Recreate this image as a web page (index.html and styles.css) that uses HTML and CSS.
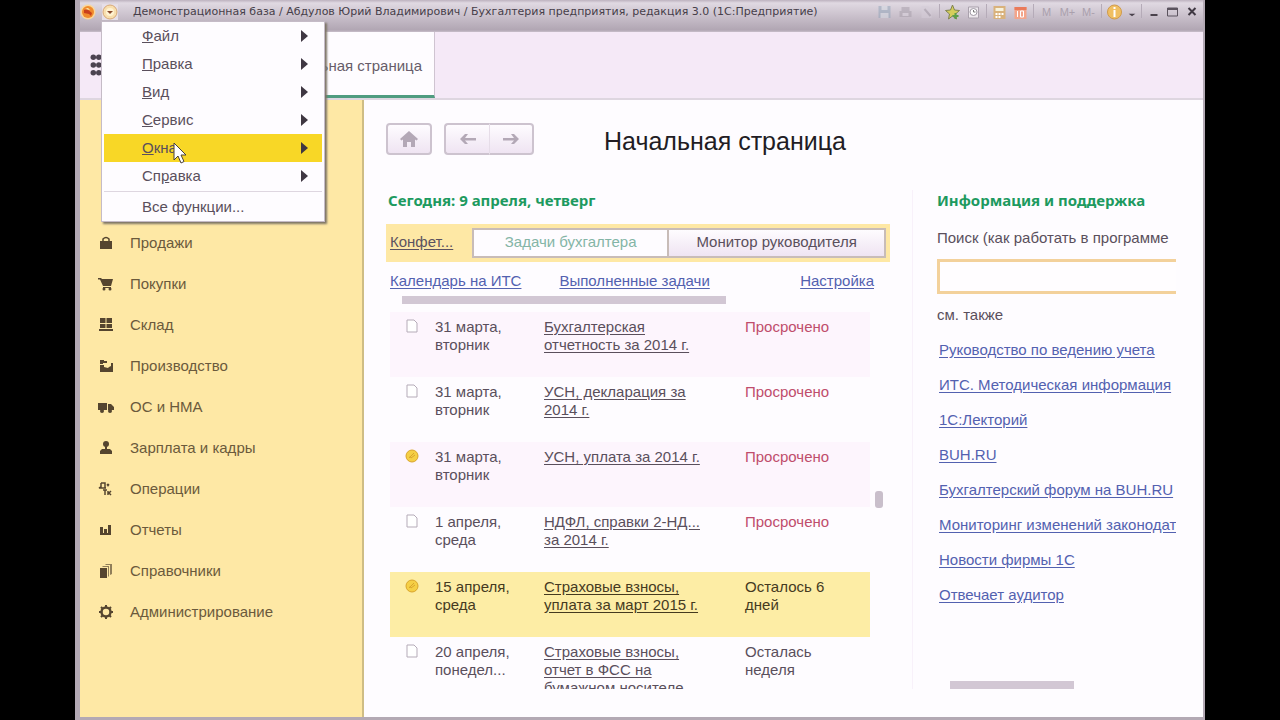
FILE: index.html
```html
<!DOCTYPE html>
<html lang="ru">
<head>
  <meta charset="UTF-8">
  <meta name="viewport" content="width=device-width, initial-scale=1.0">
  <title>Бухгалтерия предприятия, редакция 3.0</title>
  <link rel="stylesheet" href="styles.css">
</head>
<body>
  <div class="window">

    <!-- Заголовок окна -->
    <header class="titlebar">
      <svg class="orb" viewBox="0 0 16 16"><circle cx="8" cy="8" r="7.5" fill="#f9d79a"/><circle cx="8" cy="8" r="6" fill="#f08a2c"/><path d="M4 6l3-1 5 4-1 3-2-2-5-1z" fill="#c8401c"/><path d="M5 5l3-1 2 2z" fill="#fff0b0"/></svg>
      <button class="orb-button" aria-label="Главное меню">
        <svg class="orb" viewBox="0 0 16 16"><circle cx="8" cy="8" r="7" fill="#f8dfae" stroke="#d8a977"/><circle cx="8" cy="8" r="4" fill="#fff3d2"/><path d="M5 7h6L8 10z" fill="#8a4a2c"/></svg>
      </button>
      <h1 class="caption">Демонстрационная база / Абдулов Юрий Владимирович / Бухгалтерия предприятия, редакция 3.0 (1С:Предприятие)</h1>
      <div class="tools">
        <svg class="tool pale" viewBox="0 0 16 16"><path d="M2 2h12v12H2z" fill="#8fa3b8"/><path d="M5 2h6v4H5zM4 9h8v5H4z" fill="#d5dce4"/></svg>
        <svg class="tool pale" viewBox="0 0 16 16"><path d="M4 3h8v4h2v6H2V7h2z" fill="#a59ca8"/><path d="M5 9h6v3H5z" fill="#d9d2dc"/></svg>
        <svg class="tool pale" viewBox="0 0 16 16"><path d="M3 2h7l3 3v9H3z" fill="#d6ced9"/><path d="M6 5l6 7" stroke="#9c93a0" stroke-width="2"/></svg>
        <span class="divider"></span>
        <svg class="tool" viewBox="0 0 16 16"><path d="M8 1l2 5 5 .5-4 3.500 1 5L8 12l-4 3 1-5L1 6.500 6 6z" fill="#d5ce5c" stroke="#7f8450"/><path d="M11 9v6M8 12h6" stroke="#5b9e4a" stroke-width="2"/></svg>
        <svg class="tool" viewBox="0 0 16 16"><path d="M3 3h10v11H3z" fill="#eee9ee" stroke="#aaa2ad"/><circle cx="8" cy="8" r="3.500" fill="#fff" stroke="#a09aa5"/><path d="M8 6v2h2" stroke="#777" fill="none"/></svg>
        <span class="divider"></span>
        <svg class="tool" viewBox="0 0 16 16"><path d="M2 2h12v13H2z" fill="#d9b27c"/><path d="M4 4h8v3H4z" fill="#f6f2dc"/><path d="M4 9h2v2H4zM7 9h2v2H7zM10 9h2v2h-2zM4 12h2v2H4zM7 12h2v2H7z" fill="#fff"/></svg>
        <svg class="tool" viewBox="0 0 16 16"><path d="M2 3h12v12H2z" fill="#f3a58b"/><path d="M2 3h12v3H2z" fill="#ea7a5a"/><path d="M5 7v6M8 7h3v6H8z" stroke="#fff" fill="none"/></svg>
        <span class="divider"></span>
        <span class="memory">M</span>
        <span class="memory">M+</span>
        <span class="memory">M-</span>
        <span class="divider"></span>
        <svg class="tool" viewBox="0 0 16 16"><circle cx="8" cy="8" r="7" fill="#f0bf62" stroke="#cf9a4c"/><path d="M7 3h2v2H7zM7 6h2v7H7z" fill="#fff"/></svg>
        <svg class="sys narrow" viewBox="0 0 12 16"><path d="M2 10h8l-4 3z" fill="#4a424c"/></svg>
        <span class="divider"></span>
        <button class="sysbutton" aria-label="Свернуть"><svg class="sys" viewBox="0 0 12 16"><path d="M3 10h7v2H3z" fill="#4a424c"/></svg></button>
        <button class="sysbutton" aria-label="Развернуть"><svg class="sys" viewBox="0 0 12 16"><path d="M1 4h10v8H1z" fill="none" stroke="#5b535e"/><path d="M1 4h10v2H1z" fill="#5b535e"/></svg></button>
        <button class="sysbutton" aria-label="Закрыть"><svg class="sys" viewBox="0 0 12 16"><path d="M3 4l7 7M10 4l-7 7" stroke="#3f3842" stroke-width="2"/></svg></button>
      </div>
    </header>

    <!-- Панель вкладок -->
    <div class="tabs">
      <svg class="grid-icon" viewBox="0 0 20 20"><g fill="#4b4350"><circle cx="3" cy="3" r="2.500"/><circle cx="8" cy="3" r="2.500"/><circle cx="13" cy="3" r="2.500"/><circle cx="3" cy="10" r="2.500"/><circle cx="8" cy="10" r="2.500"/><circle cx="13" cy="10" r="2.500"/><circle cx="3" cy="17" r="2.500"/><circle cx="8" cy="17" r="2.500"/><circle cx="13" cy="17" r="2.500"/></g></svg>
      <a class="tab" href="#">Начальная страница</a>
    </div>

    <div class="workspace">
      <!-- Панель разделов -->
      <nav class="sections">
        <a href="#"><svg viewBox="0 0 16 16"><path d="M2 6h12v8H2z"/><path d="M5 6V4q3-3 6 0v2" fill="none" stroke="#55452f" stroke-width="1.500"/></svg>Продажи</a>
        <a href="#"><svg viewBox="0 0 16 16"><path d="M0 2h3l1 1h11l-2 7H5L2 3.500H0zM5 11h8v1H5z"/><circle cx="6" cy="13" r="1.500"/><circle cx="12" cy="13" r="1.500"/></svg>Покупки</a>
        <a href="#"><svg viewBox="0 0 16 16"><path d="M2 1h5.500v5H2zM8.500 1H14v5H8.500zM2 7h5.500v4H2zM8.500 7H14v4H8.500zM1 12h14v2H1z"/></svg>Склад</a>
        <a href="#"><svg viewBox="0 0 16 16"><path d="M2 14V7h4v2l4 1 1-1 2-1V5h2v9z"/><path d="M2 2h4v1h3v2H5v1H2z"/></svg>Производство</a>
        <a href="#"><svg viewBox="0 0 16 16"><path d="M0 4h9v7H0zM10 5h3l3 3v3h-6z"/><circle cx="4" cy="12" r="2"/><circle cx="12" cy="12" r="2"/></svg>ОС и НМА</a>
        <a href="#"><svg viewBox="0 0 16 16"><circle cx="8" cy="4" r="3"/><path d="M7 6h2v3h3l2 2v3H2v-3l2-2h3z"/></svg>Зарплата и кадры</a>
        <a href="#"><svg viewBox="0 0 16 16"><path d="M3 2h4v5M3 2v4L1 7h7M9 3l2 2M11 3L9 5M7 9v5M5 9h4M10 10v4M13 10l-2 2 2 2" fill="none" stroke="#55452f" stroke-width="1.500"/></svg>Операции</a>
        <a href="#"><svg viewBox="0 0 16 16"><path d="M2 5h3v7H2zM6 7h3v5H6zM10 3h3v9h-3zM2 11h11v2H2z"/></svg>Отчеты</a>
        <a href="#"><svg viewBox="0 0 16 16"><path d="M2 5h7v10H2z"/><path d="M4 4l1-1h6v10l-1 1V4zM7 2l1-1h6v10l-2 1V2z" opacity=".65"/></svg>Справочники</a>
        <a href="#"><svg viewBox="0 0 16 16"><circle cx="8" cy="8" r="4.500" fill="none" stroke="#55452f" stroke-width="2.500"/><path d="M8 1v3M8 12v3M1 8h3M12 8h3M3 3l2 2M11 11l2 2M13 3l-2 2M3 13l2-2" stroke="#55452f" stroke-width="2"/></svg>Администрирование</a>
      </nav>

      <main class="page">
        <div class="page-head">
          <button class="push" aria-label="Домой"><svg viewBox="0 0 20 20"><path d="M10 2l9 8-1.500 1.500L16 10.500V18h-4v-5H8v5H4v-7.500l-1.500 1L1 10z"/></svg></button>
          <div class="pair">
            <button class="push" aria-label="Назад"><svg viewBox="0 0 20 20"><path d="M18 9v2.500H7l3 3.500H7l-5-5 5-5h3L7 9z"/></svg></button>
            <button class="push" aria-label="Вперед"><svg viewBox="0 0 20 20"><path d="M2 9v2.500h11L10 15h3l5-5-5-5h-3l3 4z"/></svg></button>
          </div>
          <h2>Начальная страница</h2>
        </div>

        <div class="columns">
          <!-- Задачи -->
          <section class="tasks">
            <h3>Сегодня: 9 апреля, четверг</h3>
            <div class="switch">
              <a class="org" href="#">Конфет...</a>
              <button class="view active">Задачи бухгалтера</button>
              <button class="view">Монитор руководителя</button>
            </div>
            <div class="links">
              <a href="#">Календарь на ИТС</a>
              <a href="#">Выполненные задачи</a>
              <a href="#">Настройка</a>
            </div>
            <div class="hscroll"></div>
            <div class="list">
              <table>
                <tbody>
                  <tr>
                    <td class="mark"><svg viewBox="0 0 14 14"><path d="M2 1h7l3 3v9H2z"/></svg></td>
                    <td class="date">31 марта,<br>вторник</td>
                    <td class="name"><a href="#">Бухгалтерская<br>отчетность за 2014 г.</a></td>
                    <td class="late">Просрочено</td>
                  </tr>
                  <tr>
                    <td class="mark"><svg viewBox="0 0 14 14"><path d="M2 1h7l3 3v9H2z"/></svg></td>
                    <td class="date">31 марта,<br>вторник</td>
                    <td class="name"><a href="#">УСН, декларация за<br>2014 г.</a></td>
                    <td class="late">Просрочено</td>
                  </tr>
                  <tr>
                    <td class="mark"><svg class="coin" viewBox="0 0 14 14"><circle cx="7" cy="7" r="6"/><path d="M4 9l5-5M5 7l1 2 4-3"/></svg></td>
                    <td class="date">31 марта,<br>вторник</td>
                    <td class="name"><a href="#">УСН, уплата за 2014 г.</a></td>
                    <td class="late">Просрочено</td>
                  </tr>
                  <tr>
                    <td class="mark"><svg viewBox="0 0 14 14"><path d="M2 1h7l3 3v9H2z"/></svg></td>
                    <td class="date">1 апреля,<br>среда</td>
                    <td class="name"><a href="#">НДФЛ, справки 2-НД...<br>за 2014 г.</a></td>
                    <td class="late">Просрочено</td>
                  </tr>
                  <tr class="current">
                    <td class="mark"><svg class="coin" viewBox="0 0 14 14"><circle cx="7" cy="7" r="6"/><path d="M4 9l5-5M5 7l1 2 4-3"/></svg></td>
                    <td class="date">15 апреля,<br>среда</td>
                    <td class="name"><a href="#">Страховые взносы,<br>уплата за март 2015 г.</a></td>
                    <td>Осталось 6<br>дней</td>
                  </tr>
                  <tr class="last">
                    <td class="mark"><svg viewBox="0 0 14 14"><path d="M2 1h7l3 3v9H2z"/></svg></td>
                    <td class="date">20 апреля,<br>понедел...</td>
                    <td class="name"><a href="#">Страховые взносы,<br>отчет в ФСС на<br>бумажном носителе</a></td>
                    <td>Осталась<br>неделя</td>
                  </tr>
                </tbody>
              </table>
              <div class="vscroll"></div>
            </div>
          </section>

          <!-- Информация -->
          <section class="info">
            <h3>Информация и поддержка</h3>
            <label for="search">Поиск (как работать в программе</label>
            <input id="search" type="text">
            <p>см. также</p>
            <ul>
              <li><a href="#">Руководство по ведению учета</a></li>
              <li><a href="#">ИТС. Методическая информация</a></li>
              <li><a href="#">1С:Лекторий</a></li>
              <li><a href="#">BUH.RU</a></li>
              <li><a href="#">Бухгалтерский форум на BUH.RU</a></li>
              <li><a href="#">Мониторинг изменений законодат</a></li>
              <li><a href="#">Новости фирмы 1С</a></li>
              <li><a href="#">Отвечает аудитор</a></li>
            </ul>
            <div class="hscroll"></div>
          </section>
        </div>
      </main>
    </div>

    <!-- Главное меню -->
    <div class="menu">
      <button><span><u>Ф</u>айл</span></button>
      <button><span><u>П</u>равка</span></button>
      <button><span><u>В</u>ид</span></button>
      <button><span><u>С</u>ервис</span></button>
      <button class="hover"><span><u>О</u>кна</span></button>
      <button><span>Сп<u>р</u>авка</span></button>
      <hr>
      <button class="plain"><span>Все функции...</span></button>
      <svg class="cursor" viewBox="0 0 14 22"><path d="M1 1v17l4-4 3 7 3-1.500-3-6.500h5z" fill="#fff" stroke="#4a4038"/></svg>
    </div>
  </div>
</body>
</html>
```

FILE: styles.css
```css
* {
  box-sizing: border-box;
}
body {
  margin: 0;
  padding: 0 75px;
  background: #000;
  color: #5a4f5c;
  font-family: "Liberation Sans", Arial, sans-serif;
  font-size: 15px;
  line-height: 18px;
}
button {
  font: inherit;
  color: inherit;
  cursor: pointer;
}
h1, h2, h3, p, ul {
  margin: 0;
  padding: 0;
}
a {
  color: #5361b0;
  text-underline-offset: 2px;
}

.window {
  position: relative;
  display: flex;
  flex-direction: column;
  height: 100vh;
  border: solid #b3a9b4;
  border-width: 0 2px 3px 5px;
  background: #fefcff;
}

/* заголовок */
.titlebar {
  display: flex;
  align-items: flex-start;
  height: 32px;
  padding: 4px 4px 0 0;
  background: linear-gradient(#bdb2bf 0, #e0d9e2 3px, #cdc4cf 14px, #b1a6b3 30px, #c9bfcb);
}
.orb {
  display: block;
  width: 16px;
  height: 16px;
}
.orb-button {
  margin: 0 15px 0 6px;
  padding: 0;
  border: 0;
  background: #e6dfe8;
}
.caption {
  flex: 1;
  overflow: hidden;
  white-space: nowrap;
  color: #463e49;
  font: 11px/16px "DejaVu Sans", sans-serif;
}
.tools {
  display: flex;
  gap: 4px;
}
.tool {
  display: block;
  width: 17px;
  height: 16px;
}
.sys {
  display: block;
  width: 15px;
  height: 16px;
}
.narrow {
  width: 10px;
}
.pale {
  opacity: .5;
}
.memory {
  width: 17px;
  color: #aaa0ad;
  font-size: 11px;
  line-height: 16px;
  text-align: center;
}
.divider {
  width: 1px;
  height: 14px;
  background: #b5abb8;
}
.sysbutton {
  padding: 0;
  border: 0;
  background: none;
}

/* вкладки */
.tabs {
  display: flex;
  height: 68px;
  border-bottom: 2px solid #ded6e0;
  background: #f5e9f7;
}
.grid-icon {
  width: 22px;
  height: 22px;
  margin: 22px 0 0 10px;
}
.tab {
  width: 180px;
  margin-left: 143px;
  padding: 25px 12px 0 0;
  border-right: 1px solid #cfc4d1;
  border-bottom: 3px solid #4f9c80;
  background: #fefcff;
  color: #675c69;
  text-align: right;
  text-decoration: none;
  white-space: nowrap;
}

.workspace {
  display: flex;
  flex: 1;
  min-height: 0;
}

/* разделы */
.sections {
  flex: none;
  width: 284px;
  padding-top: 122px;
  border-right: 2px solid #cfbd85;
  background: #fee8a5;
}
.sections a {
  display: flex;
  align-items: center;
  gap: 16px;
  height: 41px;
  padding-left: 18px;
  color: #6b5a3c;
  text-decoration: none;
}
.sections svg {
  width: 16px;
  height: 16px;
  fill: #55452f;
}

/* страница */
.page {
  display: flex;
  flex: 1;
  flex-direction: column;
  min-width: 0;
  padding: 23px 26px 28px 22px;
}
.page-head {
  display: flex;
  align-items: center;
  gap: 12px;
  height: 32px;
}
.push {
  width: 46px;
  height: 32px;
  padding: 0;
  border: 2px solid #cdc3cf;
  border-radius: 4px;
  background: linear-gradient(#fefcff, #efe4f2);
}
.push svg {
  display: block;
  width: 20px;
  height: 20px;
  margin: 0 auto;
  fill: #b3a8b6;
}
.pair {
  display: flex;
}
.pair .push {
  width: 45px;
}
.pair .push:first-child {
  border-right: 0;
  border-radius: 4px 0 0 4px;
}
.pair .push:last-child {
  border-left: 1px solid #e6dde8;
  border-radius: 0 4px 4px 0;
}
.page-head h2 {
  margin-left: 58px;
  padding-top: 3px;
  color: #221c24;
  font-size: 25px;
  font-weight: normal;
  line-height: 32px;
}
.columns {
  display: flex;
  flex: 1;
  min-height: 0;
  padding-top: 35px;
}
h3 {
  color: #1d9a5f;
  font: bold 15px/20px "Noto Sans", sans-serif;
  white-space: nowrap;
}

/* задачи */
.tasks {
  display: flex;
  flex: 1;
  flex-direction: column;
  max-width: 504px;
}
.tasks h3 {
  padding-left: 2px;
}
.switch {
  display: flex;
  height: 38px;
  margin-top: 14px;
  padding: 4px;
  background: #fee8a5;
}
.org {
  width: 82px;
  color: #5c5360;
  line-height: 28px;
}
.view {
  flex: 9;
  padding: 0 0 2px;
  border: 2px solid #c8bcb8;
  background: linear-gradient(#fefcff, #efe4f2);
  white-space: nowrap;
}
.view + .view {
  flex: 10;
  border-left: 0;
}
.view.active {
  background: #fefcff;
  color: #84b5a6;
}
.links {
  display: flex;
  gap: 38px;
  padding: 10px 16px 0 4px;
  white-space: nowrap;
}
.links a:last-child {
  margin-left: auto;
}
.hscroll {
  flex: none;
  width: 324px;
  height: 8px;
  margin: 6px 0 0 16px;
  background: #d2c7d4;
}
.list {
  display: flex;
  flex: 1;
  gap: 5px;
  min-height: 0;
  margin: 8px 7px 0 4px;
  overflow: hidden;
}
table {
  flex: 1;
  border-collapse: collapse;
  table-layout: fixed;
}
tr {
  height: 65px;
}
tr:nth-child(odd) {
  background: #fdf5fd;
}
tr.current {
  background: #fdeda5;
  color: #453a1f;
}
td {
  padding: 6px 0 4px;
  vertical-align: top;
  white-space: nowrap;
}
.mark {
  width: 45px;
  padding: 7px 0 0 15px;
}
.mark svg {
  display: block;
  width: 14px;
  height: 14px;
  fill: #fff;
  stroke: #b5abb8;
}
.mark .coin {
  fill: #f5cf45;
  stroke: #d9a52c;
}
.date {
  width: 109px;
}
.name {
  width: 201px;
}
.name a {
  color: inherit;
}
.late {
  color: #c04d6c;
}
.vscroll {
  width: 8px;
  height: 17px;
  margin-top: 179px;
  border-radius: 3px;
  background: #c9bfcb;
}

/* информация */
.info {
  display: flex;
  flex: none;
  flex-direction: column;
  width: 264px;
  margin-left: 22px;
  padding-left: 24px;
  border-left: 1px solid #f8f1fa;
  overflow: hidden;
  white-space: nowrap;
}
.info label {
  margin: 19px 0 12px;
}
.info input {
  flex: none;
  width: 260px;
  height: 35px;
  border: 3px solid #f3d19b;
  background: #fffdff;
}
.info p {
  margin: 12px 0 9px;
}
.info ul {
  list-style: none;
}
.info li {
  height: 35px;
  padding: 8px 0 0 2px;
}
.info .hscroll {
  width: 124px;
  margin: auto 0 0 13px;
}

/* меню поверх окна */
.menu {
  position: absolute;
  top: 21px;
  left: 21px;
  width: 224px;
  height: 201px;
  padding: 0 2px;
  border: 1px solid #c5bbc7;
  background: #fefcff;
  box-shadow: 2px 2px 2px #7d7466;
}
.menu button {
  display: flex;
  align-items: center;
  justify-content: space-between;
  width: 100%;
  height: 28px;
  padding: 0 14px 0 38px;
  border: 0;
  background: none;
}
.menu button::after {
  content: "";
  border: solid transparent;
  border-width: 6px 0 6px 7px;
  border-left-color: #3f3742;
}
.menu button.plain::after {
  display: none;
}
.menu .hover {
  background: #f8d726;
}
.menu hr {
  margin: 1px 0;
  border: 0;
  border-top: 1px solid #ded6e0;
}
.cursor {
  position: absolute;
  top: 120px;
  left: 71px;
  width: 14px;
  height: 22px;
}
```
